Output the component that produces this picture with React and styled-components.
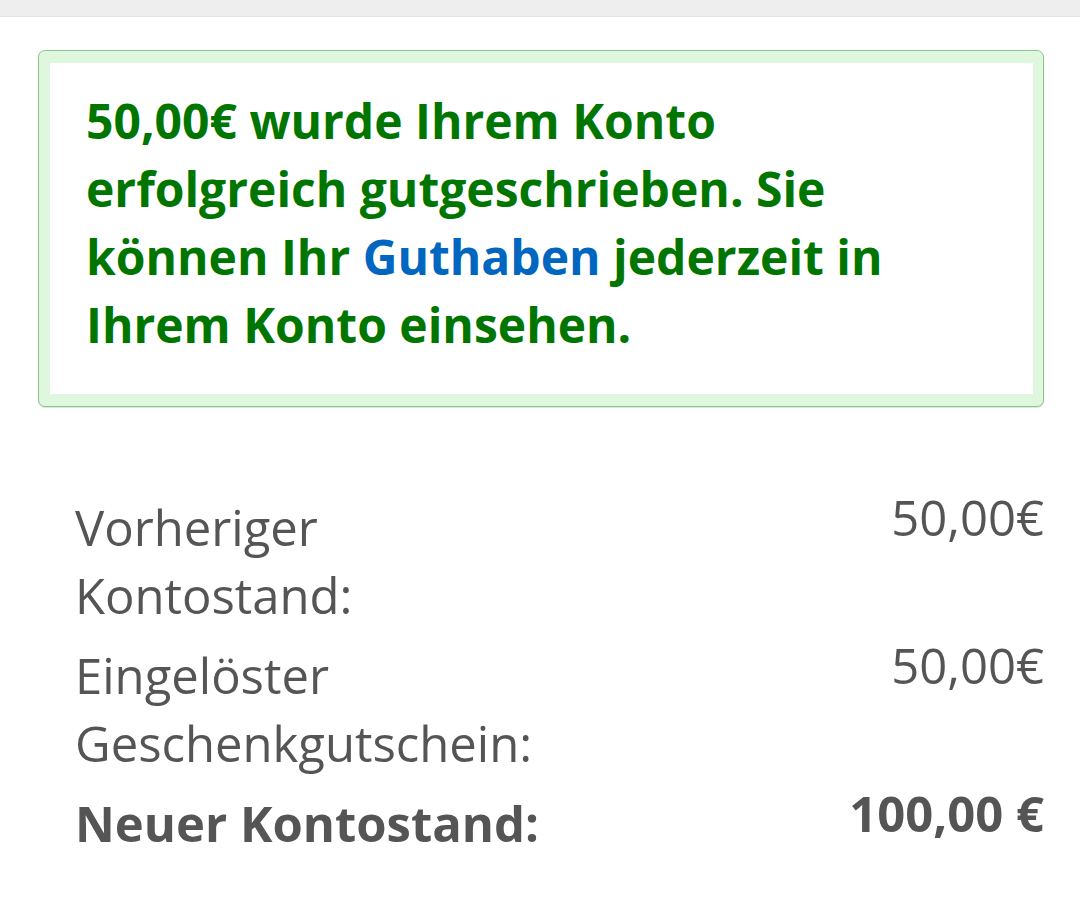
import React from 'react'
import styled, { createGlobalStyle } from 'styled-components'

const GlobalStyle = createGlobalStyle`
  body {
    margin: 0;
    background: #fff;
    font-family: "Open Sans", "Noto Sans", "Liberation Sans", sans-serif;
  }
`

const rows = [
  { label: 'Vorheriger Kontostand:', value: '50,00€' },
  { label: 'Eingelöster Geschenkgutschein:', value: '50,00€' },
  { label: 'Neuer Kontostand:', value: '100,00 €', total: true },
]

const TopBar = styled.div`
  height: 16px;
  background: #eeeeee;
  border-bottom: 1px solid #e2e2e2;
`

const Page = styled.main`
  padding: 33px 36px 40px 38px;
`

const Alert = styled.div`
  border: 1px solid #86c886;
  border-radius: 7px;
  background: #dff7df;
  padding: 12px 10px 12px 11px;
  box-shadow: 0 1px 1px rgba(0, 0, 0, 0.12);
`

const AlertBody = styled.p`
  margin: 0;
  background: #fff;
  padding: 24px 100px 35px 36px;
  color: #007600;
  font-weight: 700;
  font-size: 48px;
  line-height: 68px;
`

const Link = styled.a`
  color: #0066c0;
  text-decoration: none;
`

const Summary = styled.div`
  display: grid;
  grid-template-columns: 1fr 1fr;
  row-gap: 12px;
  margin-top: 86px;
  padding-left: 37px;
  color: #555;
  font-size: 49px;
`

const Label = styled.div`
  line-height: 68px;
  font-weight: ${p => (p.$bold ? 700 : 400)};
`

const Value = styled.div`
  text-align: right;
  line-height: 48px;
  font-weight: ${p => (p.$bold ? 700 : 400)};
`

export default function App() {
  return (
    <>
      <GlobalStyle />
      <TopBar />
      <Page>
        <Alert>
          <AlertBody>
            50,00€ wurde Ihrem Konto erfolgreich gutgeschrieben. Sie können Ihr{' '}
            <Link href="#">Guthaben</Link> jederzeit in Ihrem Konto einsehen.
          </AlertBody>
        </Alert>
        <Summary>
          {rows.map(row => (
            <React.Fragment key={row.label}>
              <Label $bold={row.total}>{row.label}</Label>
              <Value $bold={row.total}>{row.value}</Value>
            </React.Fragment>
          ))}
        </Summary>
      </Page>
    </>
  )
}
